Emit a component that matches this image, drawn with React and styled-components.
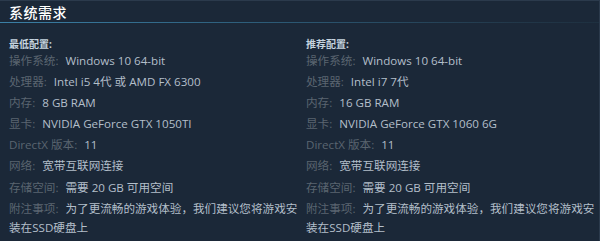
import React from "react"
import styled, { createGlobalStyle } from "styled-components"

const GlobalStyle = createGlobalStyle`
  html, body {
    margin: 0;
    padding: 0;
    background: #1b2838;
  }
  body {
    font-family: "Open Sans", "Noto Sans CJK SC", sans-serif;
  }
`

const Panel = styled.div`
  width: 600px;
  height: 241px;
  box-sizing: border-box;
  background: #1b2838;
  border-top: 1px solid #2b3a4c;
  border-right: 1px solid #2b3a4c;
  overflow: hidden;
`

const Title = styled.h2`
  margin: 0;
  padding: 2px 0 0 9px;
  height: 19px;
  font-size: 14px;
  font-weight: 500;
  line-height: 19px;
  color: #ffffff;
  letter-spacing: 0.5px;
  border-bottom: 1px solid transparent;
  border-image: linear-gradient(to right, #3b80a6 0%, #2e5f7c 40%, #22384a 85%, #1e3040 100%) 1;
`

const Columns = styled.div`
  display: grid;
  grid-template-columns: 291px 291px;
  column-gap: 6px;
  padding: 14px 0 0 9px;
`

const Column = styled.div`
  display: flex;
  flex-direction: column;
`

const Heading = styled.div`
  font-size: 10px;
  font-weight: 700;
  line-height: 14px;
  color: #c6d4df;
`

const List = styled.ul`
  list-style: none;
  margin: 0;
  padding: 0;
  display: flex;
  flex-direction: column;
  gap: 2.1px;
`

const Item = styled.li`
  font-size: 11.6px;
  line-height: 19px;
  color: #b3bfca;
`

const Label = styled.span`
  color: #5a6570;
  margin-right: 4px;
`

const minimum = [
  ["操作系统", "Windows 10 64-bit"],
  ["处理器", "Intel i5 4代 或 AMD FX 6300"],
  ["内存", "8 GB RAM"],
  ["显卡", "NVIDIA GeForce GTX 1050TI"],
  ["DirectX 版本", "11"],
  ["网络", "宽带互联网连接"],
  ["存储空间", "需要 20 GB 可用空间"],
  ["附注事项", "为了更流畅的游戏体验，我们建议您将游戏安装在SSD硬盘上"],
]

const recommended = [
  ["操作系统", "Windows 10 64-bit"],
  ["处理器", "Intel i7 7代"],
  ["内存", "16 GB RAM"],
  ["显卡", "NVIDIA GeForce GTX 1060 6G"],
  ["DirectX 版本", "11"],
  ["网络", "宽带互联网连接"],
  ["存储空间", "需要 20 GB 可用空间"],
  ["附注事项", "为了更流畅的游戏体验，我们建议您将游戏安装在SSD硬盘上"],
]

function ReqColumn({ heading, rows }) {
  return (
    <Column>
      <Heading>{heading}</Heading>
      <List>
        {rows.map(([label, value]) => (
          <Item key={label}>
            <Label>{label}:</Label> {value}
          </Item>
        ))}
      </List>
    </Column>
  )
}

export default function App() {
  return (
    <>
      <GlobalStyle />
      <Panel>
        <Title>系统需求</Title>
        <Columns>
          <ReqColumn heading="最低配置:" rows={minimum} />
          <ReqColumn heading="推荐配置:" rows={recommended} />
        </Columns>
      </Panel>
    </>
  )
}
